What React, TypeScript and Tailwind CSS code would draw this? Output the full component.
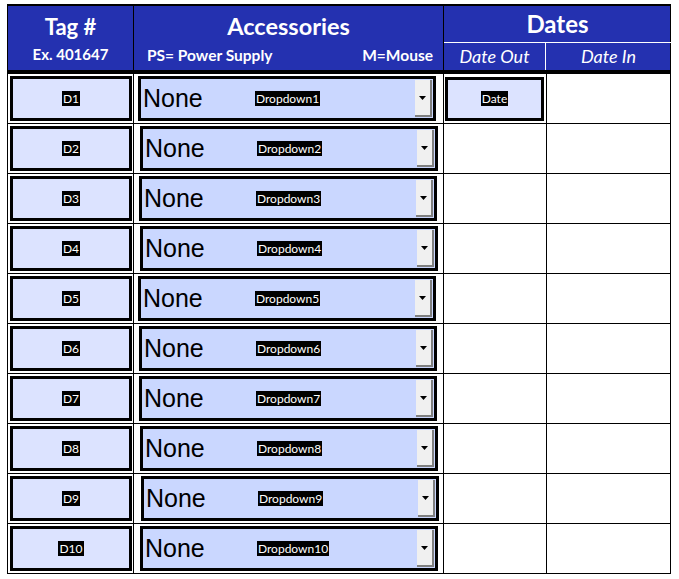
import React from "react";

const rows = [
  { id: "D1", dd: "Dropdown1", ml: "ml-[4px]" },
  { id: "D2", dd: "Dropdown2", ml: "ml-[6px]" },
  { id: "D3", dd: "Dropdown3", ml: "ml-[5px]" },
  { id: "D4", dd: "Dropdown4", ml: "ml-[6px]" },
  { id: "D5", dd: "Dropdown5", ml: "ml-[4px]" },
  { id: "D6", dd: "Dropdown6", ml: "ml-[5px]" },
  { id: "D7", dd: "Dropdown7", ml: "ml-[5px]" },
  { id: "D8", dd: "Dropdown8", ml: "ml-[6px]" },
  { id: "D9", dd: "Dropdown9", ml: "ml-[7px]" },
  { id: "D10", dd: "Dropdown10", ml: "ml-[6px]" },
];

const Label = ({ text }: { text: string }) => (
  <span className="bg-black text-white text-[12px] leading-[15px] px-[1px] font-['Lato',sans-serif]">
    {text}
  </span>
);

export default function App() {
  return (
    <div className="w-[679px] h-[579px] bg-white pt-[4px] pl-[7px] font-['Lato',sans-serif]">
      <div className="w-[664px] border-t-2 border-l border-r border-black">
        {/* Header */}
        <div className="grid grid-cols-[126px_310px_227px] h-[64px] bg-[#2431b0] text-white font-bold">
          <div className="flex flex-col items-center border-r border-black">
            <div className="text-[22px] leading-none mt-[10px]">Tag #</div>
            <div className="text-[15px] leading-none mt-[9px]">Ex. 401647</div>
          </div>
          <div className="flex flex-col border-r border-black">
            <div className="text-[23.5px] leading-none mt-[9px] text-center">Accessories</div>
            <div className="flex justify-between text-[15.5px] leading-none mt-[9px] pl-[13px] pr-[10px]">
              <span>PS= Power Supply</span>
              <span>M=Mouse</span>
            </div>
          </div>
          <div className="flex flex-col">
            <div className="h-[37px] flex items-center justify-center text-[24px] border-b border-white">
              Dates
            </div>
            <div className="flex-1 grid grid-cols-[102px_1fr] font-normal italic text-[18px]">
              <div className="flex items-center justify-center border-r border-white">Date Out</div>
              <div className="flex items-center justify-center">Date In</div>
            </div>
          </div>
        </div>
        <div className="h-[4px] bg-black" />

        {/* Body */}
        {rows.map((r, i) => (
          <div
            key={r.id}
            className="grid grid-cols-[126px_310px_103px_1fr] h-[50px] border-b border-black"
          >
            <div className="border-r border-black flex items-center pl-[2px]">
              <div className="w-[122px] h-[45px] border-[3px] border-black bg-[#dce3ff] flex items-center justify-center">
                <Label text={r.id} />
              </div>
            </div>
            <div className="border-r border-black flex items-center">
              <div
                className={`${r.ml} w-[298px] h-[45px] border-[3px] border-black bg-[#cad7ff] flex items-center`}
              >
                <span className="font-['Liberation_Sans',sans-serif] text-[25px] leading-none text-black ml-[2px] w-[112px]">
                  None
                </span>
                <Label text={r.dd} />
                <div className="ml-auto mr-[1px] w-[17px] h-[37px] bg-[#f0f0f0] border-r-2 border-b-2 border-[#808080] flex items-center justify-center">
                  <svg width="7" height="4" viewBox="0 0 7 4">
                    <path d="M0 0h7L3.5 4z" fill="#000" />
                  </svg>
                </div>
              </div>
            </div>
            <div className="border-r border-black flex items-center pl-[1px]">
              {i === 0 && (
                <div className="w-[99px] h-[44px] border-[3px] border-black bg-[#dce3ff] flex items-center justify-center">
                  <Label text="Date" />
                </div>
              )}
            </div>
            <div />
          </div>
        ))}
      </div>
    </div>
  );
}
